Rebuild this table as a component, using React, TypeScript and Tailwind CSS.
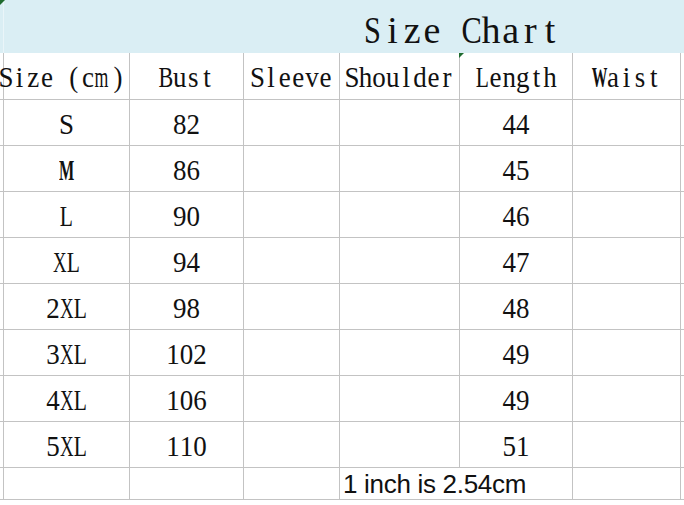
import React from "react";

const widths = ["w-[126px]", "w-[114px]", "w-[96px]", "w-[120px]", "w-[113px]", "w-[108px]"];
const header = ["", "Bust", "Sleeve", "Shoulder", "Length", "Waist"];
const rows: [string, string, string][] = [
  ["S", "82", "44"],
  ["M", "86", "45"],
  ["L", "90", "46"],
  ["XL", "94", "47"],
  ["2XL", "98", "48"],
  ["3XL", "102", "49"],
  ["4XL", "106", "49"],
  ["5XL", "110", "51"],
];

const line = "border-[#c3c3c3]";
const serif = "font-['Liberation_Serif','Times_New_Roman',serif] leading-none text-[#111]";

const BODY_SCALE: Record<string, string> = {
  M: "scale-x-[0.6] font-bold",
  X: "scale-x-[0.7]",
  W: "scale-x-[0.58] font-bold",
  L: "scale-x-[0.8]",
  B: "scale-x-[0.82]",
  m: "scale-x-[0.66]",
};

const TITLE_SCALE: Record<string, string> = {
  S: "scale-x-[0.8]",
  C: "scale-x-[0.8]",
};

function Mono({ text, cell, scale }: { text: string; cell: string; scale: Record<string, string> }) {
  return (
    <span className="inline-flex">
      {[...text].map((ch, i) => (
        <span key={i} className={`${cell} shrink-0 flex justify-center`}>
          <span className={`inline-block ${scale[ch] ?? ""}`}>{ch === " " ? "\u00a0" : ch}</span>
        </span>
      ))}
    </span>
  );
}

function Cell({ w, children }: { w: string; children?: React.ReactNode }) {
  return (
    <div className={`${w} shrink-0 h-full flex items-center justify-center border-r ${line}`}>{children}</div>
  );
}

function T({ children }: { children: string }) {
  return (
    <span className={`${serif} text-[27px] inline-block scale-y-[1.06] pt-[3px] whitespace-nowrap`}>
      <Mono text={children} cell="w-[13.6px]" scale={BODY_SCALE} />
    </span>
  );
}

function SizeCm() {
  return (
    <span className={`${serif} text-[27px] inline-flex shrink-0 scale-y-[1.06] pt-[3px] ml-[2px] whitespace-nowrap`}>
      <Mono text="Size" cell="w-[13.7px]" scale={BODY_SCALE} />
      <span className="w-[27.4px] shrink-0 flex justify-end pr-[3px]">(</span>
      <Mono text="cm" cell="w-[13.7px]" scale={BODY_SCALE} />
      <span className="w-[27.4px] shrink-0 flex justify-start pl-[5px]">)</span>
    </span>
  );
}

export default function App() {
  return (
    <div className="w-[684px] h-[505px] bg-white overflow-hidden relative">
      <div className="h-[53px] bg-[#daeef4] flex items-center">
        <div className="w-[3px] h-full shrink-0" />
        <div className="w-px h-full bg-[#eaf5f9] shrink-0" />
        <span className={`ml-[359px] pt-[6px] ${serif} text-[38px] inline-block whitespace-nowrap`}>
          <Mono text="Size Chart" cell="w-[19.7px]" scale={TITLE_SCALE} />
        </span>
      </div>

      <div className={`flex h-[47px] border-b ${line}`}>
        <div className={`w-[4px] shrink-0 border-r ${line}`} />
        {header.map((h, i) => (
          <Cell key={i} w={widths[i]}>
            {i === 0 ? <SizeCm /> : <T>{h}</T>}
          </Cell>
        ))}
      </div>

      {rows.map((r, ri) => (
        <div key={ri} className={`flex h-[46px] border-b ${line}`}>
          <div className={`w-[4px] shrink-0 border-r ${line}`} />
          <Cell w={widths[0]}>
            <T>{r[0]}</T>
          </Cell>
          <Cell w={widths[1]}>
            <T>{r[1]}</T>
          </Cell>
          <Cell w={widths[2]} />
          <Cell w={widths[3]} />
          <Cell w={widths[4]}>
            <T>{r[2]}</T>
          </Cell>
          <Cell w={widths[5]} />
        </div>
      ))}

      <div className={`flex h-[32px] border-b ${line}`}>
        <div className={`w-[4px] shrink-0 border-r ${line}`} />
        <Cell w={widths[0]} />
        <Cell w={widths[1]} />
        <Cell w={widths[2]} />
        <div className={`w-[233px] shrink-0 h-full flex items-center border-r ${line}`}>
          <span className="pl-[3px] pt-[1px] font-['Liberation_Sans',Arial,sans-serif] text-[26px] tracking-[-0.3px] leading-none text-[#111] whitespace-nowrap">
            1 inch is 2.54cm
          </span>
        </div>
        <Cell w={widths[5]} />
      </div>

      <svg className="absolute left-0 top-0" width="5" height="5" viewBox="0 0 5 5">
        <polygon points="0,0 5,0 0,5" fill="#1f6b2e" />
      </svg>
      <svg className="absolute left-[459px] top-[53px]" width="5" height="5" viewBox="0 0 5 5">
        <polygon points="0,0 5,0 0,5" fill="#1f6b2e" />
      </svg>
    </div>
  );
}
